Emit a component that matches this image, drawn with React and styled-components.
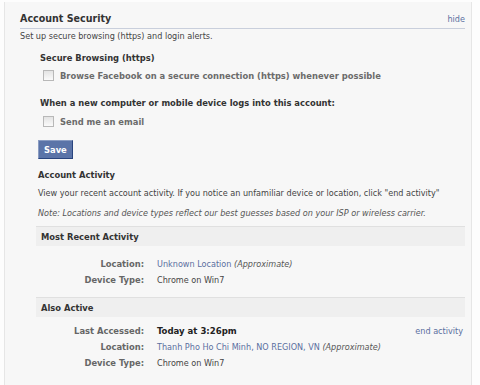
import React from 'react';
import styled, { createGlobalStyle } from 'styled-components';

const Global = createGlobalStyle`
  body {
    margin: 0;
    background: #fdfdfd;
    font-family: "DejaVu Sans Condensed", Tahoma, "DejaVu Sans", sans-serif;
    color: #333;
  }
`;

const Panel = styled.div`
  margin: 2px 8px 0 4px;
  height: 383px;
  box-sizing: border-box;
  background: #f7f7f7;
  border-left: 1px solid #e6e6e6;
  border-right: 1px solid #e6e6e6;
  padding: 9px 6px 0 15px;
`;

const TitleBar = styled.div`
  display: flex;
  justify-content: space-between;
  align-items: baseline;
  border-bottom: 1px solid #c9cfdc;
  padding-bottom: 2px;
  line-height: 14px;
`;

const Title = styled.h2`
  margin: 0;
  font-size: 10.6px;
  font-weight: bold;
  color: #333;
`;

const Link = styled.a`
  color: #5b6f9f;
  font-size: 9px;
  text-decoration: none;
  cursor: pointer;
`;

const Text = styled.p`
  margin: ${p => p.$m || '0'};
  font-size: 9px;
  line-height: 12px;
  color: ${p => p.$italic ? '#555' : '#444'};
  font-style: ${p => p.$italic ? 'italic' : 'normal'};
`;

const Section = styled.div`
  padding-left: ${p => p.$indent || 0}px;
`;

const SubTitle = styled.h3`
  margin: ${p => p.$m || '0'};
  font-size: 9.3px;
  line-height: 12px;
  font-weight: bold;
  color: #333;
`;

const CheckRow = styled.label`
  display: flex;
  align-items: center;
  gap: 6px;
  margin: ${p => p.$m || '5px'} 0 0 3px;
  height: 12px;
  font-size: 9.3px;
  font-weight: bold;
  color: #6b6b6b;
`;

const Box = styled.span`
  width: 11px;
  height: 11px;
  box-sizing: border-box;
  border: 1px solid #b8b8b8;
  background: linear-gradient(#e4e4e4, #fafafa);
`;

const SaveButton = styled.button`
  display: block;
  margin-top: 13px;
  padding: 0 5px;
  height: 19px;
  background: #5b74a8;
  border: 1px solid;
  border-color: #8a9cc2 #29447e #29447e #8a9cc2;
  color: #fff;
  font-family: inherit;
  font-size: 9.3px;
  font-weight: bold;
`;

const GroupHeader = styled.div`
  margin: ${p => p.$m || '0'};
  height: 19px;
  display: flex;
  align-items: center;
  padding-left: 5px;
  background: #efefef;
  border-top: 1px solid #e0e0e0;
  font-size: 9.3px;
  font-weight: bold;
  color: #333;
`;

const InfoGrid = styled.div`
  display: grid;
  grid-template-columns: 106px 1fr auto;
  column-gap: 13px;
  row-gap: 4px;
  margin: ${p => p.$m || '0'};
  font-size: 9px;
  line-height: 12px;
  padding-right: 2px;
`;

const Label = styled.span`
  text-align: right;
  font-weight: bold;
  font-size: 9.3px;
  color: #666;
`;

const Value = styled.span`
  color: ${p => p.$strong ? '#222' : '#444'};
  font-weight: ${p => p.$strong ? 'bold' : 'normal'};
  font-size: ${p => p.$strong ? '9.5px' : 'inherit'};
  grid-column: ${p => p.$wide ? 'span 2' : 'auto'};
`;

const Approx = styled.em`
  color: #555;
`;

const Row = ({ label, children, wide, strong }) => (
  <>
    <Label>{label}</Label>
    <Value $wide={wide} $strong={strong}>{children}</Value>
  </>
);

export default function App() {
  return (
    <>
      <Global />
      <Panel>
        <TitleBar>
          <Title>Account Security</Title>
          <Link>hide</Link>
        </TitleBar>
        <Text $m="1px 0 0 0">Set up secure browsing (https) and login alerts.</Text>

        <Section $indent={20}>
          <SubTitle $m="10px 0 0 0">Secure Browsing (https)</SubTitle>
          <CheckRow><Box />Browse Facebook on a secure connection (https) whenever possible</CheckRow>
          <SubTitle $m="16px 0 0 0">When a new computer or mobile device logs into this account:</SubTitle>
          <CheckRow $m="6px"><Box />Send me an email</CheckRow>
        </Section>

        <Section $indent={18}>
          <SaveButton>Save</SaveButton>
          <SubTitle $m="10px 0 0 0">Account Activity</SubTitle>
          <Text $m="6px 0 0 0">View your recent account activity. If you notice an unfamiliar device or location, click "end activity"</Text>
          <Text $italic $m="8px 0 0 0">Note: Locations and device types reflect our best guesses based on your ISP or wireless carrier.</Text>

          <GroupHeader $m="7px 0 0 -2px">Most Recent Activity</GroupHeader>
          <InfoGrid $m="12px 0 0 0">
            <Row label="Location:" wide><Link>Unknown Location</Link> <Approx>(Approximate)</Approx></Row>
            <Row label="Device Type:" wide>Chrome on Win7</Row>
          </InfoGrid>

          <GroupHeader $m="11px 0 0 -2px">Also Active</GroupHeader>
          <InfoGrid $m="8px 0 0 0">
            <Label>Last Accessed:</Label>
            <Value $strong>Today at 3:26pm</Value>
            <Link>end activity</Link>
            <Row label="Location:" wide><Link>Thanh Pho Ho Chi Minh, NO REGION, VN</Link> <Approx>(Approximate)</Approx></Row>
            <Row label="Device Type:" wide>Chrome on Win7</Row>
          </InfoGrid>
        </Section>
      </Panel>
    </>
  );
}
